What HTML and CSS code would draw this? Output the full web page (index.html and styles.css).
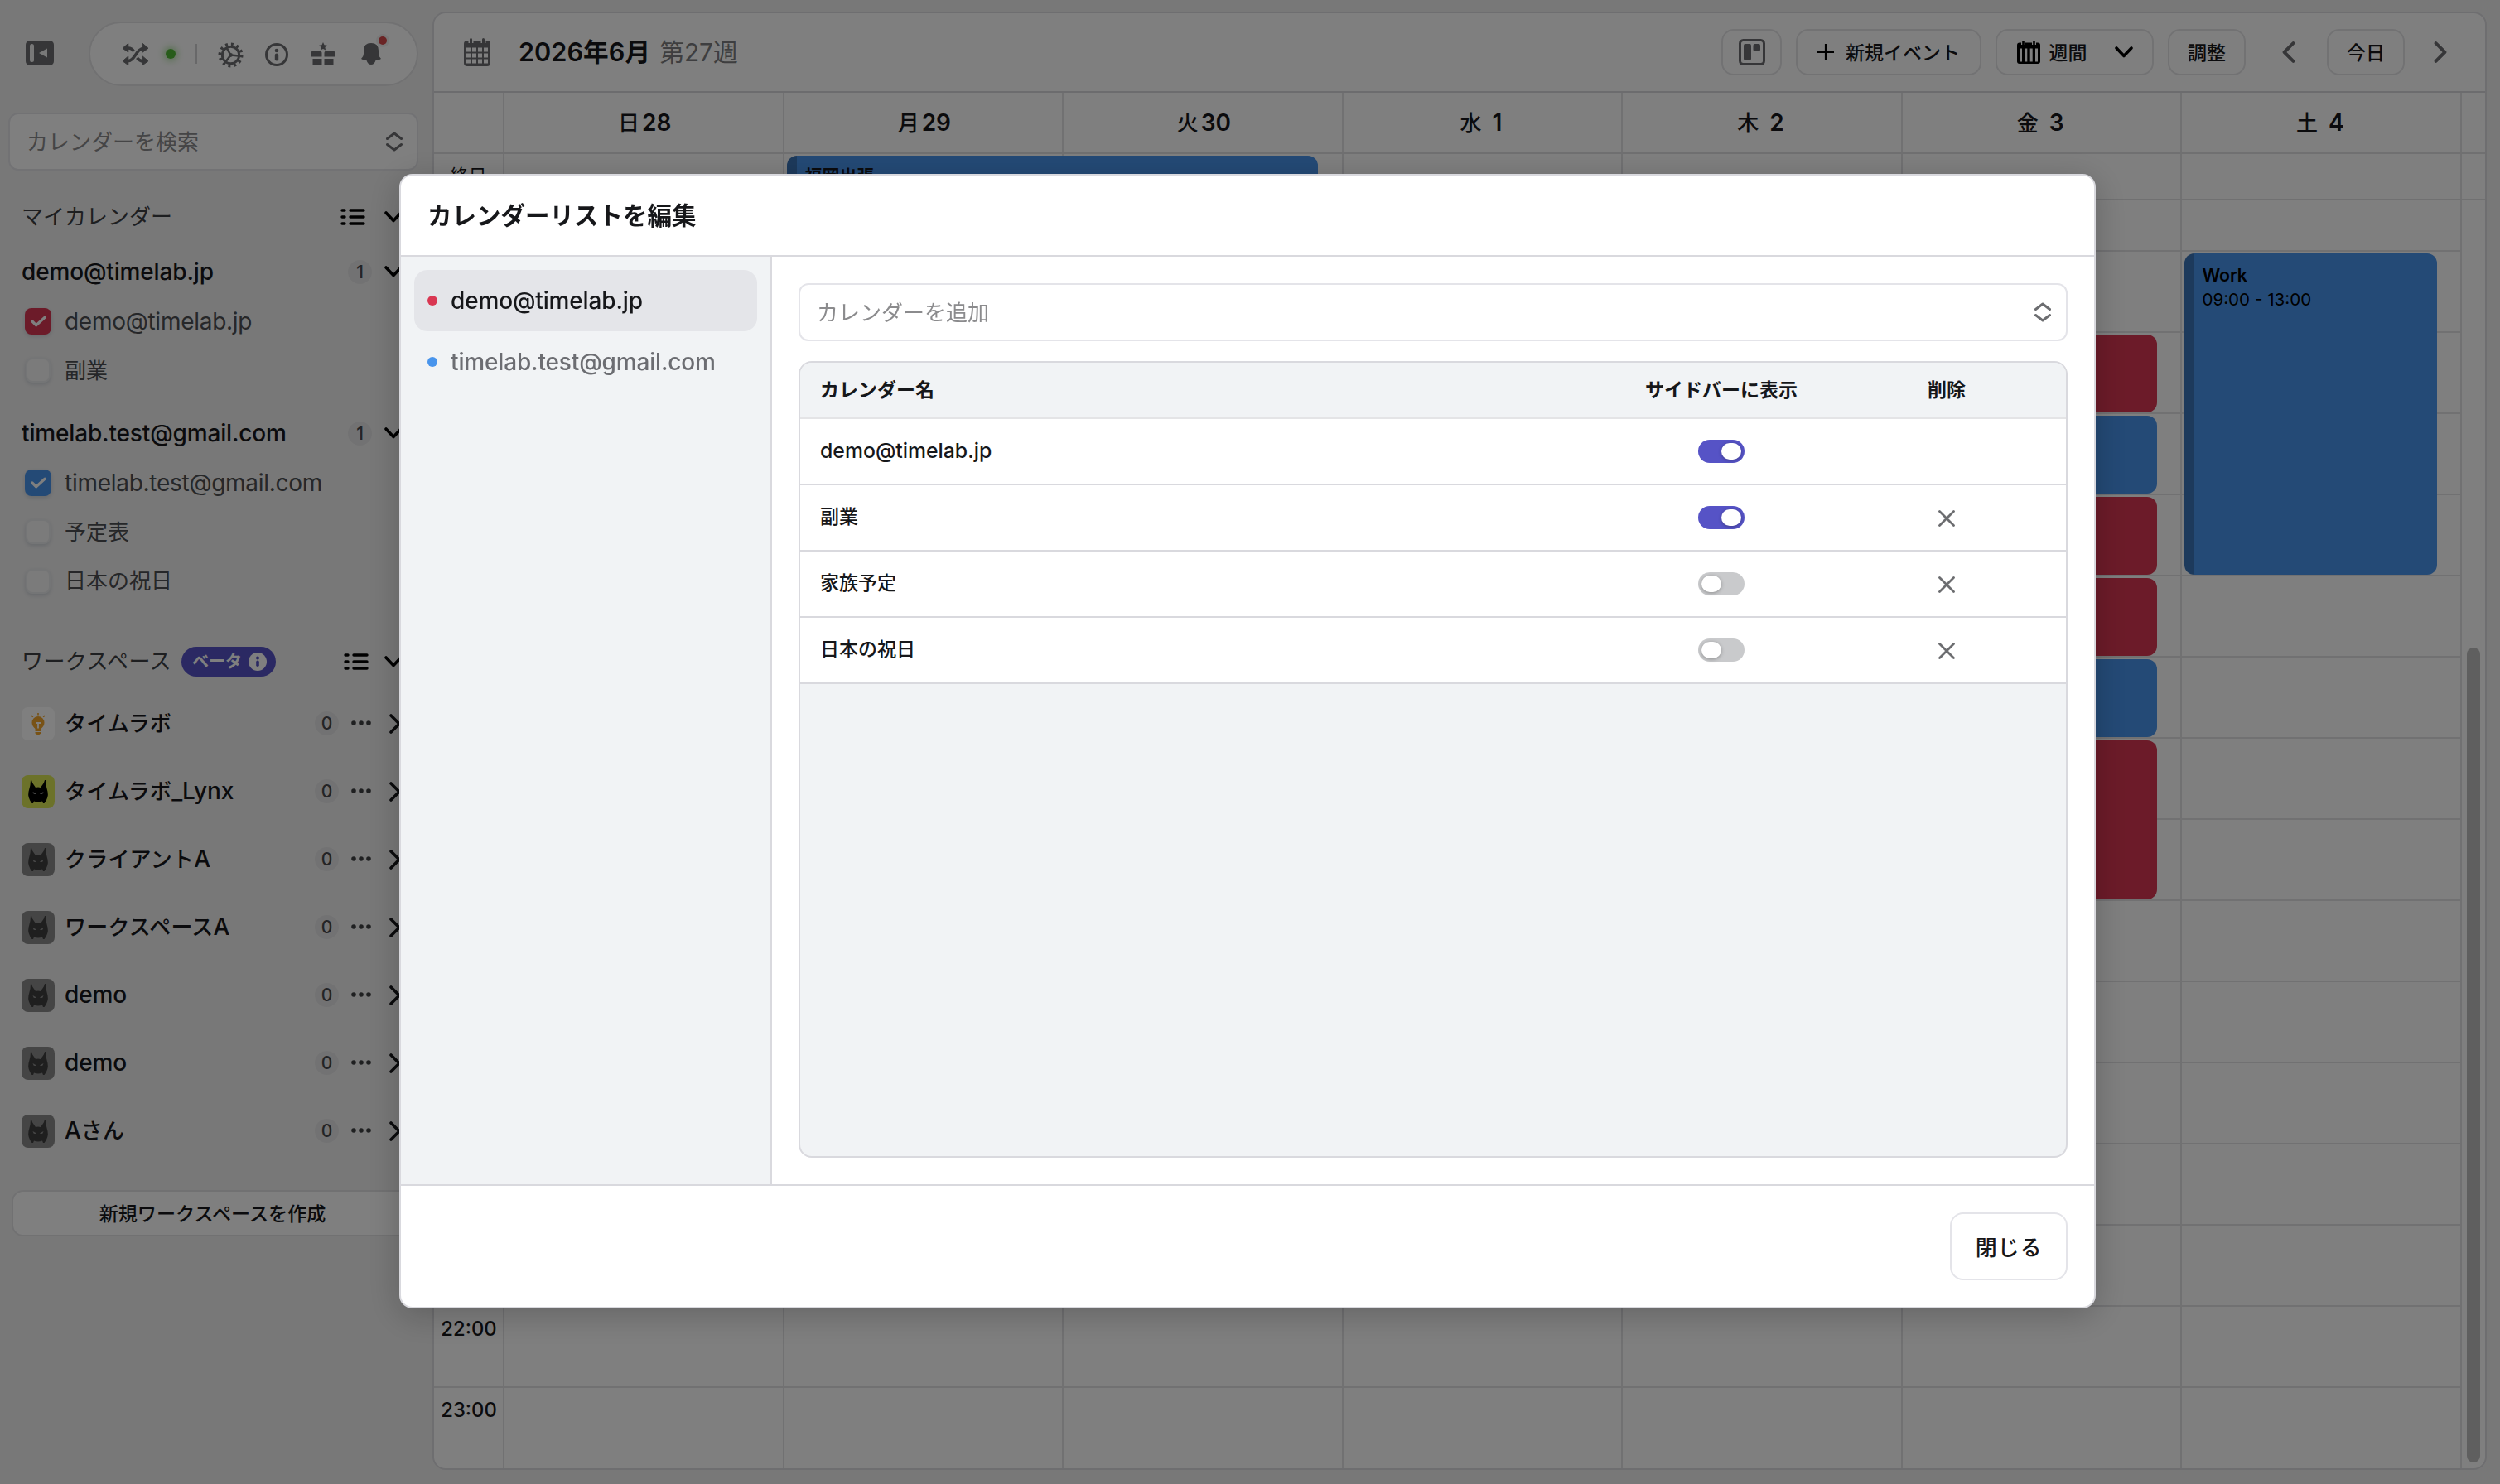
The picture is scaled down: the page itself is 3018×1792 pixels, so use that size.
FILE: index.html
```html
<!DOCTYPE html>
<html lang="ja">
<head>
    <meta charset="UTF-8">
    <meta name="viewport" content="width=device-width, initial-scale=1.0">
    <title>カレンダー</title>
    <link rel="stylesheet" href="styles.css">
</head>
<body>
    <svg class="sprite">
        <symbol id="updown" viewBox="0 0 20 24"><path d="M1.5 8.5L10 2l8.5 6.5M1.5 15.5L10 22l8.5-6.5" fill="none" stroke="currentColor" stroke-width="3" stroke-linecap="round" stroke-linejoin="round"/></symbol>
        <symbol id="down" viewBox="0 0 22 14"><path d="M2 2l9 9.5L20 2" fill="none" stroke="currentColor" stroke-width="3.6" stroke-linecap="round" stroke-linejoin="round"/></symbol>
        <symbol id="right" viewBox="0 0 14 24"><path d="M2 2l10 10L2 22" fill="none" stroke="currentColor" stroke-width="3.6" stroke-linecap="round" stroke-linejoin="round"/></symbol>
        <symbol id="list" viewBox="0 0 30 20"><path d="M2 2h3M2 10h3M2 18h3M12 2h16M12 10h16M12 18h16" fill="none" stroke="currentColor" stroke-width="3.4" stroke-linecap="round"/></symbol>
        <symbol id="dots" viewBox="0 0 24 6"><circle cx="3" cy="3" r="2.8"/><circle cx="12" cy="3" r="2.8"/><circle cx="21" cy="3" r="2.8"/></symbol>
        <symbol id="close" viewBox="0 0 20 20"><path d="M1.5 1.5l17 17M18.5 1.5l-17 17" fill="none" stroke="currentColor" stroke-width="2.8" stroke-linecap="round"/></symbol>
        <symbol id="check" viewBox="0 0 20 14"><path d="M2 7l5 5L18 2" fill="none" stroke="currentColor" stroke-width="3.4" stroke-linecap="round" stroke-linejoin="round"/></symbol>
        <symbol id="lynx" viewBox="0 0 40 40">
            <path d="M11 6h1l1.2 3.5L17 15q3-1 6 0l3.8-5.5L28 6h1l.5 6 2 8q1.5 7-4 14H26l-1-2.5q-5 2-10 0L14 34h-1.5q-5.5-7-4-14l2-8z"/>
            <path class="lynx-eye" d="M13.5 20l4.5 2.5q-1.5 1-3.500 0zM26.5 20L22 22.5q1.5 1 3.5 0z"/>
        </symbol>
    </svg>

    <div class="app">
        <aside class="sidebar">
            <div class="side-top">
                <svg class="collapse" viewBox="0 0 34 30"><rect width="34" height="30" rx="5" fill="#6c6d70"/><rect x="5" y="4" width="5" height="22" rx="2.5" fill="#f1f1f1"/><path d="M16 15l10-5.5v11z" fill="#f1f1f1"/></svg>
                <div class="tool-pill">
                    <svg class="i-shuffle" viewBox="0 0 32 28"><path d="M5 6q6-1 9 4M5 22c11 1 11-16 22-16M27 22q-5 1-9-4" fill="none" stroke="#6c6d70" stroke-width="3.6"/><path d="M0 6l7-6v11zM32 6l-7-6v11zM0 22l7-6v11zM32 22l-7-6v11z" fill="#6c6d70" stroke="#6c6d70" stroke-linejoin="round"/></svg>
                    <span class="online"></span>
                    <span class="divider"></span>
                    <svg class="i-gear" viewBox="0 0 32 32"><circle cx="16" cy="16" r="13.5" fill="none" stroke="#6c6d70" stroke-width="4" stroke-dasharray="3 4.07"/><circle cx="16" cy="16" r="10.5" fill="none" stroke="#6c6d70" stroke-width="3"/><path d="M16 16l10 1M16 16l-5-9M16 16l-6 8" stroke="#6c6d70" stroke-width="2.6"/><circle cx="16" cy="16" r="2.5" fill="#6c6d70"/></svg>
                    <svg class="i-info" viewBox="0 0 28 28"><circle cx="14" cy="14" r="12.5" fill="none" stroke="#6c6d70" stroke-width="3"/><circle cx="14" cy="9" r="2.3" fill="#6c6d70"/><rect x="11.8" y="12.5" width="4.4" height="9" rx="2.2" fill="#6c6d70"/></svg>
                    <svg class="i-gift" viewBox="0 0 28 28" fill="#6c6d70"><path d="M14 0l1.5 3.3 3.5.4-2.6 2.4.7 3.5L14 7.900l-3.100 1.700.7-3.500L9 3.700l3.500-.4z"/><path d="M1 10.500h9q2.500 0 2.500 2.500v4.500H0v-6zM27 10.500h-9q-2.500 0-2.500 2.500v4.500H28v-6zM1.500 20h11v8h-10l-1-1zM15.500 20h11v7l-1 1h-10z"/></svg>
                    <svg class="i-bell" viewBox="0 0 28 32"><path d="M13 5q-9 0-9 9v4q0 3-3 6 2 2 6.500 2 1.500 5 5.500 5t5.500-5q4.500 0 6.500-2-3-3-3-6v-4q0-9-9-9z" fill="#6c6d70"/><circle cx="27" cy="2" r="8" fill="#f1f1f1"/><circle cx="27" cy="2" r="5" fill="#d4484a"/></svg>
                </div>
            </div>

            <div class="search">
                <span>カレンダーを検索</span>
                <svg class="updown"><use href="#updown"/></svg>
            </div>

            <div class="section">
                <span class="section-name">マイカレンダー</span>
                <svg class="list"><use href="#list"/></svg>
                <svg class="down"><use href="#down"/></svg>
            </div>

            <div class="account">
                <span class="account-name">demo@timelab.jp</span>
                <span class="badge">1</span>
                <svg class="down"><use href="#down"/></svg>
            </div>
            <ul class="calendars">
                <li><span class="box red"><svg><use href="#check"/></svg></span><span class="latin">demo@timelab.jp</span></li>
                <li><span class="box"></span>副業</li>
            </ul>

            <div class="account">
                <span class="account-name">timelab.test@gmail.com</span>
                <span class="badge">1</span>
                <svg class="down"><use href="#down"/></svg>
            </div>
            <ul class="calendars">
                <li><span class="box blue"><svg><use href="#check"/></svg></span><span class="latin">timelab.test@gmail.com</span></li>
                <li><span class="box"></span>予定表</li>
                <li><span class="box"></span>日本の祝日</li>
            </ul>

            <div class="section section-ws">
                <span class="section-name">ワークスペース</span>
                <span class="beta">ベータ<svg viewBox="0 0 22 22"><circle cx="11" cy="11" r="11" fill="#fff"/><circle cx="11" cy="6.5" r="2" fill="#5653c6"/><rect x="9.2" y="9.5" width="3.6" height="7.5" rx="1.8" fill="#5653c6"/></svg></span>
                <svg class="list"><use href="#list"/></svg>
                <svg class="down"><use href="#down"/></svg>
            </div>

            <ul class="workspaces">
                <li>
                    <span class="ws-icon bulb"><svg viewBox="0 0 40 40"><path d="M20 11a7.5 7.5 0 0 1 7.5 7.5q0 4-4 7.500v3h-7v-3q-4-3.500-4-7.500A7.500 7.500 0 0 1 20 11zM16.500 30h7v1.500L20 34l-3.500-2.500z" fill="#f0a52c"/><path d="M20 7v2.500M12 10l1.800 1.800M28 10l-1.800 1.800" stroke="#f0a52c" stroke-width="1.600"/><path d="M17 19h6M20 19v6.500" stroke="#fff" stroke-width="1.800"/></svg></span>
                    <span class="ws-name">タイムラボ</span><span class="badge">0</span><svg class="dots"><use href="#dots"/></svg><svg class="right"><use href="#right"/></svg>
                </li>
                <li>
                    <span class="ws-icon lime"><svg><use href="#lynx"/></svg></span>
                    <span class="ws-name">タイムラボ<span class="latin">_Lynx</span></span><span class="badge">0</span><svg class="dots"><use href="#dots"/></svg><svg class="right"><use href="#right"/></svg>
                </li>
                <li>
                    <span class="ws-icon"><svg><use href="#lynx"/></svg></span>
                    <span class="ws-name">クライアント<span class="latin">A</span></span><span class="badge">0</span><svg class="dots"><use href="#dots"/></svg><svg class="right"><use href="#right"/></svg>
                </li>
                <li>
                    <span class="ws-icon"><svg><use href="#lynx"/></svg></span>
                    <span class="ws-name">ワークスペース<span class="latin">A</span></span><span class="badge">0</span><svg class="dots"><use href="#dots"/></svg><svg class="right"><use href="#right"/></svg>
                </li>
                <li>
                    <span class="ws-icon"><svg><use href="#lynx"/></svg></span>
                    <span class="ws-name"><span class="latin">demo</span></span><span class="badge">0</span><svg class="dots"><use href="#dots"/></svg><svg class="right"><use href="#right"/></svg>
                </li>
                <li>
                    <span class="ws-icon"><svg><use href="#lynx"/></svg></span>
                    <span class="ws-name"><span class="latin">demo</span></span><span class="badge">0</span><svg class="dots"><use href="#dots"/></svg><svg class="right"><use href="#right"/></svg>
                </li>
                <li>
                    <span class="ws-icon"><svg><use href="#lynx"/></svg></span>
                    <span class="ws-name"><span class="latin">A</span>さん</span><span class="badge">0</span><svg class="dots"><use href="#dots"/></svg><svg class="right"><use href="#right"/></svg>
                </li>
            </ul>

            <button class="create-ws">新規ワークスペースを作成</button>
        </aside>

        <main class="panel">
            <div class="toolbar">
                <svg class="cal-icon" viewBox="0 0 32 34"><rect y="3" width="32" height="31" rx="4" fill="#6c6d70"/><path d="M8.5 0v6M23.5 0v6" stroke="#fff" stroke-width="6"/><path d="M8.5 1.5v5M23.5 1.5v5" stroke="#6c6d70" stroke-width="3" stroke-linecap="round"/><path d="M3 11.500h5v5H3zM10 11.500h5v5h-5zM17 11.500h5v5h-5zM24 11.500h5v5h-5zM3 18.500h5v5H3zM10 18.500h5v5h-5zM17 18.500h5v5h-5zM24 18.500h5v5h-5zM3 25.500h5v5H3zM10 25.500h5v5h-5zM17 25.500h5v5h-5zM24 25.500h5v5h-5z" fill="#fff"/></svg>
                <h1>2026年6月</h1>
                <span class="week-no">第27週</span>
                <div class="tools">
                    <button class="btn board"><svg viewBox="0 0 32 32"><rect x="1.5" y="1.5" width="29" height="29" rx="4" fill="none" stroke="#6c6d70" stroke-width="3"/><rect x="6" y="6" width="9" height="20" rx="2" fill="#6c6d70"/><rect x="17.5" y="6" width="8.5" height="9" rx="2" fill="#6c6d70"/></svg></button>
                    <button class="btn new-event"><svg viewBox="0 0 20 20"><path d="M10 0v20M0 10h20" stroke="#000" stroke-width="2.2"/></svg><span>新規イベント</span></button>
                    <button class="btn week"><svg class="week-icon" viewBox="0 0 28 28"><rect y="2.5" width="28" height="25.5" rx="3" fill="#000"/><path d="M7.5 0v5M20.5 0v5" stroke="#fff" stroke-width="5"/><path d="M7.5 1v4.500M20.500 1v4.500" stroke="#000" stroke-width="2.600" stroke-linecap="round"/><path d="M4.500 9.500v16M10.800 9.500v16M17.200 9.500v16M23.500 9.500v16" stroke="#fff" stroke-width="3"/></svg><span>週間</span><svg class="down"><use href="#down"/></svg></button>
                    <button class="btn adjust"><span>調整</span></button>
                    <svg class="prev"><use href="#right"/></svg>
                    <button class="btn today"><span>今日</span></button>
                    <svg class="next"><use href="#right"/></svg>
                </div>
            </div>

            <div class="cols day-head">
                <div></div>
                <div>日<b>28</b></div>
                <div>月<b>29</b></div>
                <div>火<b>30</b></div>
                <div>水<b class="one">1</b></div>
                <div>木<b class="one">2</b></div>
                <div>金<b class="one">3</b></div>
                <div>土<b class="one">4</b></div>
            </div>

            <div class="cols all-day">
                <div class="all-day-label">終日</div>
                <div></div>
                <div><div class="event blue trip"><b>福岡出張</b></div></div>
                <div></div>
                <div></div>
                <div></div>
                <div></div>
                <div></div>
            </div>

            <div class="cols hours">
                <div class="times">
                    <span class="h22">22:00</span>
                    <span class="h23">23:00</span>
                </div>
                <div></div>
                <div></div>
                <div></div>
                <div></div>
                <div></div>
                <div class="day">
                    <div class="event red h10"></div>
                    <div class="event blue h11"></div>
                    <div class="event red h12"></div>
                    <div class="event red h13"></div>
                    <div class="event blue h14"></div>
                    <div class="event red h15"></div>
                </div>
                <div class="day">
                    <div class="event blue work"><b>Work</b><span>09:00 - 13:00</span></div>
                </div>
                <div class="scroll"><div class="thumb"></div></div>
            </div>
        </main>
    </div>

    <div class="overlay">
        <div class="modal">
            <h2>カレンダーリストを編集</h2>
            <div class="modal-body">
                <nav class="accounts">
                    <a class="active"><i class="dot red"></i><span>demo@timelab.jp</span></a>
                    <a><i class="dot blue"></i><span>timelab.test@gmail.com</span></a>
                </nav>
                <div class="editor">
                    <div class="add">
                        <span>カレンダーを追加</span>
                        <svg class="updown"><use href="#updown"/></svg>
                    </div>
                    <div class="table">
                        <div class="row head"><span>カレンダー名</span><span>サイドバーに表示</span><span>削除</span></div>
                        <div class="row"><span class="email">demo@timelab.jp</span><span class="toggle on"></span><span></span></div>
                        <div class="row"><span>副業</span><span class="toggle on"></span><svg class="close"><use href="#close"/></svg></div>
                        <div class="row"><span>家族予定</span><span class="toggle"></span><svg class="close"><use href="#close"/></svg></div>
                        <div class="row"><span>日本の祝日</span><span class="toggle"></span><svg class="close"><use href="#close"/></svg></div>
                    </div>
                </div>
            </div>
            <div class="modal-foot">
                <button class="close-btn">閉じる</button>
            </div>
        </div>
    </div>
</body>
</html>
```
FILE: styles.css
```css
* {
    box-sizing: border-box;
}

body {
    margin: 0;
    background-color: #f1f1f1;
    color: #16171a;
    font-family: Inter, "Noto Sans CJK JP", sans-serif;
    font-size: 26px;
    line-height: 1.2;
    overflow: hidden;
}

ul {
    list-style: none;
    margin: 0;
    padding: 0;
}

button {
    font-family: inherit;
    color: inherit;
    padding: 0;
}

svg {
    display: block;
    flex-shrink: 0;
}

.sprite {
    display: none;
}

.app {
    display: flex;
    height: 1792px;
    padding: 14px 16px 17px 0;
}

.latin {
    font-size: 28px;
    letter-spacing: -0.1px;
}

/* sidebar */
.sidebar {
    width: 522px;
    flex-shrink: 0;
    padding: 12px 17px 0 10px;
}

.side-top {
    display: flex;
    align-items: center;
    justify-content: space-between;
    height: 78px;
    padding-left: 21px;
}

.collapse {
    width: 34px;
    height: 30px;
    margin-bottom: 2px;
}

.tool-pill {
    display: flex;
    align-items: center;
    width: 398px;
    height: 78px;
    padding-left: 39px;
    border: 2px solid #e3e3e5;
    border-radius: 39px;
    background-color: #fff;
}

.i-shuffle {
    width: 31px;
    height: 28px;
    margin-top: 2px;
}

.online {
    width: 12px;
    height: 12px;
    margin-left: 21px;
    border-radius: 50%;
    background-color: #4fb934;
    box-shadow: 0 0 8px 2px rgba(79, 185, 52, 0.5);
}

.divider {
    width: 2px;
    height: 24px;
    margin: 0 25px 0 24px;
    background-color: #d0d0d2;
}

.i-gear {
    width: 31px;
    height: 31px;
    margin-top: 2px;
}

.i-info {
    width: 28px;
    height: 28px;
    margin: 2px 0 0 26px;
}

.i-gift {
    width: 28px;
    height: 28px;
    margin-left: 28px;
}

.i-bell {
    width: 28px;
    height: 32px;
    margin: 0 0 4px 31px;
    overflow: visible;
}

.search,
.add {
    display: flex;
    align-items: center;
    justify-content: space-between;
    height: 70px;
    border: 2px solid #e4e4e9;
    border-radius: 12px;
    background-color: #fff;
    color: #8b8b8d;
}

.search span,
.add span {
    padding-top: 2px;
}

.search {
    margin-top: 32px;
    padding: 0 17px 0 20px;
}

.updown {
    width: 20px;
    height: 24px;
    color: #6c6d70;
}

.section {
    display: flex;
    align-items: center;
    height: 40px;
    margin-top: 36px;
    padding-left: 16px;
    color: #3d3f43;
}

.section-name {
    flex-shrink: 0;
}

.list {
    width: 30px;
    height: 20px;
    margin-left: auto;
    color: #000;
}

.down {
    width: 22px;
    height: 14px;
    color: #000;
}

.section .down {
    margin: 0 19px 0 23px;
}

.account {
    display: flex;
    align-items: center;
    height: 40px;
    margin-top: 26px;
    padding: 0 19px 0 16px;
}

.account-name {
    flex: 1;
    padding-top: 2px;
    font-size: 28px;
    font-weight: 500;
    letter-spacing: -0.15px;
}

.badge {
    width: 29px;
    height: 29px;
    border-radius: 50%;
    background-color: #e5e5e6;
    color: #47494c;
    font-size: 21px;
    font-weight: 500;
    line-height: 29px;
    text-align: center;
}

.account .down {
    margin-left: 15px;
}

.calendars {
    margin-top: 10px;
    color: #4c4e52;
}

.calendars li {
    display: flex;
    align-items: center;
    height: 59.5px;
    padding-left: 20px;
}

.calendars + .account {
    margin-top: 26px;
}

.box {
    display: flex;
    align-items: center;
    justify-content: center;
    width: 30px;
    height: 30px;
    margin: 0 17px 0 1px;
    border: 2px solid #e9eaec;
    border-radius: 8px;
    background-color: #f6f6f6;
    box-shadow: 0 2px 5px rgba(60, 80, 110, 0.2);
}

.box svg {
    width: 19px;
    height: 14px;
    color: #fff;
}

.box.red,
.box.blue {
    width: 32px;
    height: 32px;
    margin: 0 16px 0 0;
    border: 0;
}

.calendars .latin {
    padding-top: 2px;
    letter-spacing: -0.27px;
}

.red {
    background-color: #d93752;
}

.blue {
    background-color: #4894ec;
}

.section-ws {
    margin-top: 47px;
}

.section-ws .section-name {
    letter-spacing: 0.4px;
}

.section-ws .list {
    margin-right: -4px;
}

.beta {
    display: flex;
    align-items: center;
    height: 36px;
    margin-left: 12px;
    padding: 0 11px 0 13px;
    border-radius: 18px;
    background-color: #5653c6;
    color: #fff;
    font-size: 20px;
    font-weight: 700;
}

.beta svg {
    width: 22px;
    height: 22px;
    margin-left: 8px;
}

.workspaces {
    margin-top: 14px;
}

.workspaces li {
    display: flex;
    align-items: center;
    height: 82px;
    padding: 0 21px 0 16px;
}

.ws-icon {
    width: 40px;
    height: 40px;
    margin-right: 12px;
    border-radius: 8px;
    background-color: #8b8b8b;
    color: #3f3f3f;
}

.ws-icon svg {
    width: 40px;
    height: 40px;
    fill: currentColor;
}

.lynx-eye {
    fill: #8b8b8b;
}

.bulb {
    background-color: #fff;
}

.lime {
    background-color: #d8e455;
    color: #000;
}

.ws-name {
    flex: 1;
    font-weight: 500;
    letter-spacing: 0.2px;
}

.dots {
    width: 24px;
    height: 6px;
    margin: 0 22px 2px 15px;
    fill: #3f4043;
}

.right {
    width: 14px;
    height: 24px;
}

.create-ws {
    display: block;
    width: 485px;
    height: 56px;
    margin: 30px 0 0 4px;
    padding-bottom: 2px;
    border: 2px solid #e3e3e5;
    border-radius: 14px;
    background-color: #fff;
    font-size: 23.1px;
    font-weight: 500;
}

/* calendar */
.panel {
    flex: 1;
    display: flex;
    flex-direction: column;
    border: 2px solid #dcdce0;
    border-radius: 16px;
    background-color: #fff;
    overflow: hidden;
}

.toolbar {
    display: flex;
    align-items: center;
    height: 96px;
    flex-shrink: 0;
    padding: 0 46px 0 36px;
    border-bottom: 2px solid #d8d8dc;
}

.cal-icon {
    width: 32px;
    height: 34px;
}

h1 {
    margin: 0 0 0 34px;
    font-size: 30.7px;
    font-weight: 600;
}

.week-no {
    margin-left: 11px;
    padding-top: 2px;
    font-size: 29.8px;
    color: #7c7d80;
}

.tools {
    display: flex;
    align-items: center;
    margin-left: auto;
}

.btn {
    display: flex;
    align-items: center;
    justify-content: center;
    height: 56px;
    border: 2px solid #e4e4e7;
    border-radius: 15px;
    background-color: #fff;
    font-size: 23px;
    font-weight: 500;
}

.btn span {
    padding-bottom: 2px;
}

.board {
    width: 73px;
}

.board svg {
    width: 32px;
    height: 32px;
}

.new-event {
    width: 224px;
    margin-left: 17px;
}

.new-event svg {
    width: 20px;
    height: 20px;
    margin-right: 14px;
}

.week {
    width: 191px;
    margin-left: 17px;
}

.week-icon {
    width: 28px;
    height: 28px;
    margin-right: 11px;
}

.week .down {
    margin-left: 33px;
}

.adjust {
    width: 94px;
    margin-left: 17px;
}

.prev,
.next {
    width: 16px;
    height: 26px;
    color: #6c6d70;
}

.prev {
    margin: 0 38px 0 44px;
    transform: scaleX(-1);
}

.today {
    width: 94px;
    margin-right: 35px;
}

.cols {
    display: grid;
    grid-template-columns: 85px repeat(7, 1fr) 28px;
    flex-shrink: 0;
}

.cols > div {
    min-width: 0;
    border-right: 2px solid #e2e2e5;
}

.cols > .scroll {
    border-right: 0;
}

.day-head {
    height: 74px;
    border-bottom: 2px solid #e0e0e3;
}

.day-head div {
    display: flex;
    align-items: center;
    justify-content: center;
    gap: 3px;
    padding: 2px 0 0 3px;
    font-weight: 500;
}

.day-head b {
    font-size: 28px;
    font-weight: 600;
}

.day-head .one {
    margin: 0 6px 0 10px;
}

.all-day {
    height: 56px;
    border-bottom: 2px solid #e0e0e3;
}

.all-day-label {
    font-size: 22px;
    line-height: 52px;
    text-align: center;
}

.event {
    border-radius: 12px;
}

.event.blue {
    background: linear-gradient(90deg, #3a74b8 12px, #4894ec 12px);
}

/* runs over into the next day */
.trip {
    position: relative;
    width: 641px;
    height: 48px;
    margin: 2px 0 0 3px;
    padding-left: 22px;
    font-size: 21px;
    line-height: 50px;
}

/* starts at half past eight, one row is an hour */
.hours {
    flex: 1;
    background: repeating-linear-gradient(#e2e2e5 0 2px, transparent 2px 98px) 0 60px / calc(100% - 28px) 1470px no-repeat;
}

.times,
.day {
    display: grid;
    grid-template-rows: 60px repeat(15, 98px);
}

.times {
    font-size: 23.8px;
    font-weight: 500;
    text-align: center;
    line-height: 29px;
}

.times span {
    padding: 14px 0 0 1px;
}

.day .event {
    margin: 4px 28px 0 3px;
}

.h10 { grid-row: 3; }
.h11 { grid-row: 4; }
.h12 { grid-row: 5; }
.h13 { grid-row: 6; }
.h14 { grid-row: 7; }
.h15 { grid-row: 8 / 10; }
.h22 { grid-row: 15; }
.h23 { grid-row: 16; }

.work {
    display: flex;
    flex-direction: column;
    grid-row: 2 / 6;
    padding: 11px 0 0 21px;
    color: #000;
    font-size: 20.6px;
    line-height: 30px;
}

.work b {
    font-size: 21.3px;
    font-weight: 600;
}

.scroll {
    padding: 540px 0 0 6px;
}

.thumb {
    width: 16px;
    height: 984px;
    border-radius: 8px;
    background-color: #bfbfbf;
}

/* modal */
.overlay {
    position: fixed;
    inset: 0;
    display: flex;
    align-items: center;
    justify-content: center;
    padding: 0 6px 2px 0;
    background-color: rgba(0, 0, 0, 0.5);
}

.modal {
    display: flex;
    flex-direction: column;
    width: 2048px;
    height: 1370px;
    border: 2px solid #d9d9de;
    border-radius: 16px;
    background-color: #fff;
    box-shadow: 0 8px 40px rgba(0, 0, 0, 0.22);
    overflow: hidden;
}

h2 {
    height: 98px;
    margin: 0;
    padding-left: 32px;
    border-bottom: 2px solid #d9d9de;
    font-size: 29.5px;
    font-weight: 600;
    line-height: 96px;
}

.modal-body {
    flex: 1;
    display: flex;
}

.accounts {
    width: 448px;
    padding: 16px;
    border-right: 2px solid #d9d9de;
    background-color: #f1f3f5;
}

.accounts a {
    display: flex;
    align-items: center;
    height: 74px;
    padding-left: 16px;
    border-radius: 16px;
    color: #6c6d72;
    font-size: 28px;
    font-weight: 500;
    letter-spacing: -0.15px;
}

.accounts span {
    padding-top: 2px;
}

.accounts .active {
    background-color: #e4e5e9;
    color: #16171a;
}

.dot {
    width: 12px;
    height: 12px;
    margin-right: 16px;
    border-radius: 50%;
}

.editor {
    flex: 1;
    display: flex;
    flex-direction: column;
    gap: 24px;
    padding: 32px;
}

.add {
    padding: 0 18px 0 20px;
}

.table {
    flex: 1;
    border: 2px solid #d9d9de;
    border-radius: 16px;
    background-color: #f1f3f5;
    overflow: hidden;
}

.row {
    display: grid;
    grid-template-columns: 1fr 272px 272px;
    align-items: center;
    justify-items: center;
    height: 80px;
    padding: 0 8px 0 24px;
    border-bottom: 2px solid #d9d9de;
    background-color: #fff;
    font-size: 23px;
    font-weight: 500;
}

.row > :first-child {
    justify-self: start;
}

.row.head {
    height: 68px;
    padding-top: 2px;
    border-color: #e4e4e6;
    background-color: #f1f3f5;
    font-weight: 600;
}

.email {
    font-size: 24.8px;
}

.toggle {
    width: 56px;
    height: 28px;
    padding: 4px;
    border-radius: 14px;
    background-color: #c9cacc;
}

.toggle::before {
    content: "";
    display: block;
    width: 24px;
    height: 20px;
    border-radius: 10px;
    background-color: #fff;
    box-shadow: 0 1px 4px rgba(0, 0, 0, 0.3);
}

.toggle.on {
    background-color: #5653c6;
}

.toggle.on::before {
    margin-left: auto;
}

.close {
    width: 20px;
    height: 20px;
    margin-top: 2px;
    color: #6c6d70;
}

.modal-foot {
    display: flex;
    align-items: center;
    justify-content: flex-end;
    height: 148px;
    padding: 0 32px;
    border-top: 2px solid #d9d9de;
}

.close-btn {
    width: 142px;
    height: 82px;
    padding-bottom: 2px;
    border: 2px solid #e4e4e9;
    border-radius: 16px;
    background-color: #fff;
    font-size: 26px;
    font-weight: 500;
    letter-spacing: 0.9px;
}
```
